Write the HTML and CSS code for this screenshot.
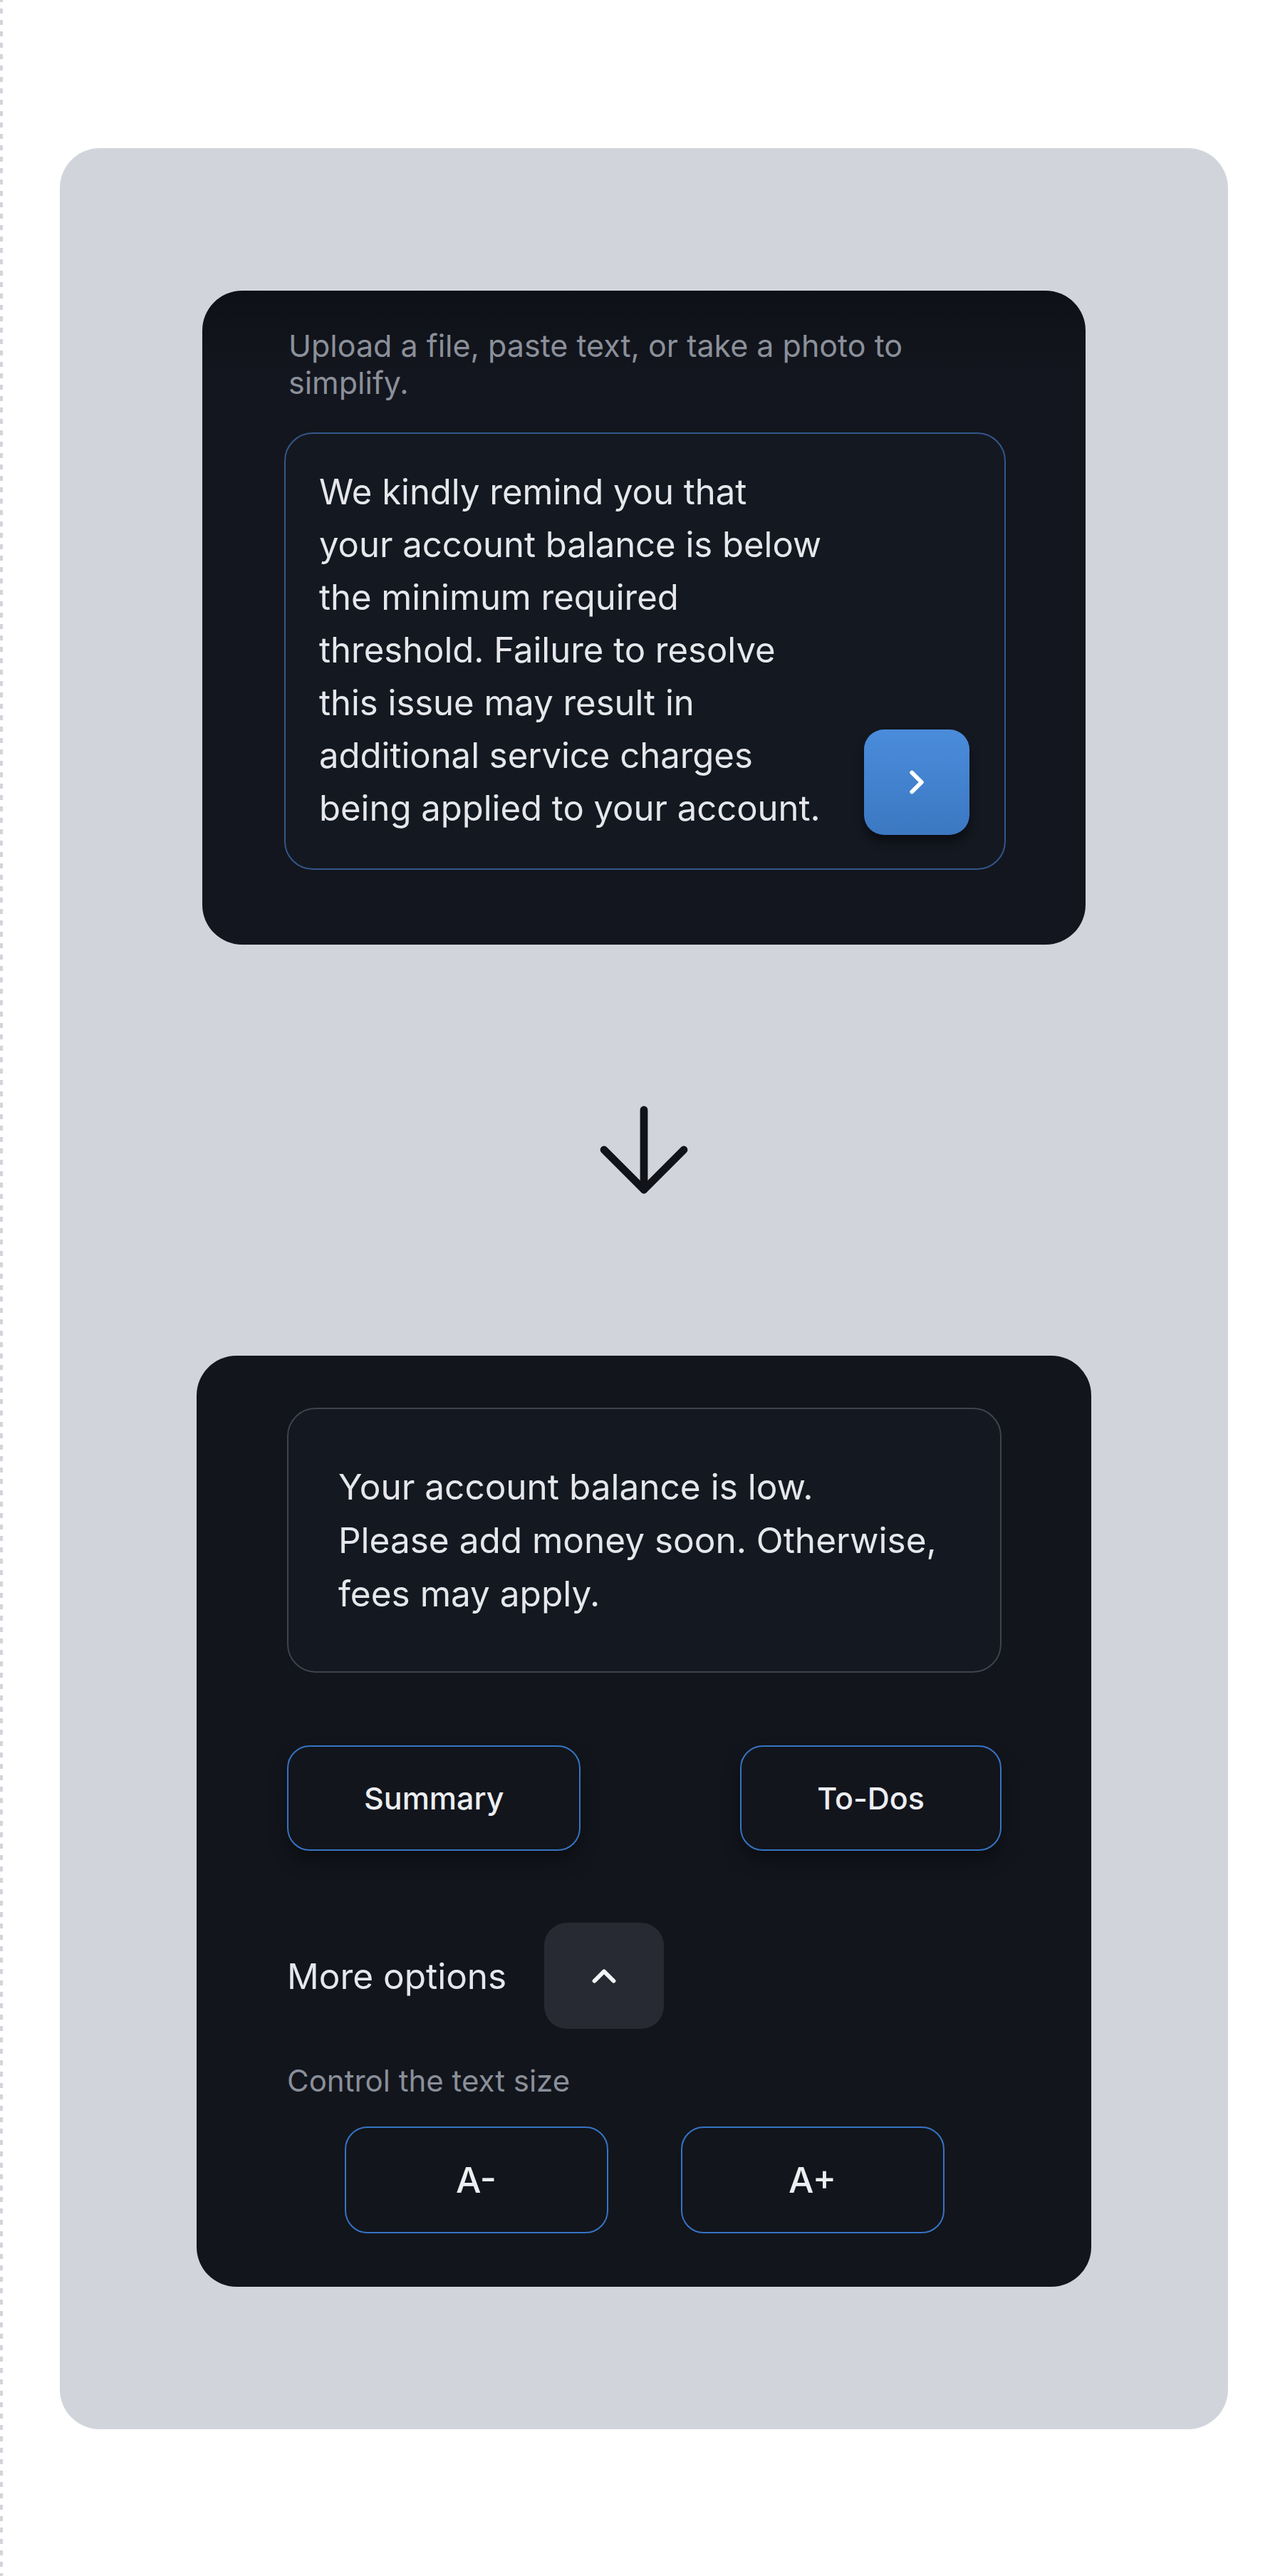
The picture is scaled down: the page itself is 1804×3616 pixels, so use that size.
FILE: index.html
```html
<!DOCTYPE html>
<html lang="en">
<head>
    <meta charset="UTF-8">
    <meta name="viewport" content="width=device-width, initial-scale=1.0">
    <title>Simplify</title>
    <link rel="stylesheet" href="styles.css">
</head>
<body>
<div class="page">
    <div class="guide"></div>
    <main class="stage">
        <div class="panel">

            <section class="input-card">
                <p class="hint">Upload a file, paste text, or take a photo to simplify.</p>
                <div class="input-box">
                    <p class="input-text">We kindly remind you that your account balance is below the minimum required threshold. Failure to resolve this issue may result in additional service charges being applied to your account.</p>
                    <button class="send-btn" aria-label="Simplify">
                        <svg width="54" height="54" viewBox="0 0 24 24" fill="none" stroke="#fff" stroke-width="2.6" stroke-linecap="round" stroke-linejoin="round"><path d="m9 18 6-6-6-6"/></svg>
                    </button>
                </div>
            </section>

            <div class="flow-arrow">
                <svg width="192" height="192" viewBox="0 0 24 24" fill="none" stroke="#111318" stroke-width="1.35" stroke-linecap="round" stroke-linejoin="round"><path d="M12 5v14"/><path d="m19 12-7 7-7-7"/></svg>
            </div>

            <section class="output-card">
                <div class="output-box">
                    <p>Your account balance is low.<br>Please add money soon. Otherwise, fees may apply.</p>
                </div>
                <div class="mode-row">
                    <button class="outline-btn mode-btn">Summary</button>
                    <button class="outline-btn mode-btn">To-Dos</button>
                </div>
                <div class="more-row">
                    <span>More options</span>
                    <button class="toggle-btn" aria-label="Hide options">
                        <svg width="54" height="54" viewBox="0 0 24 24" fill="none" stroke="#f3f4f6" stroke-width="2.6" stroke-linecap="round" stroke-linejoin="round"><path d="m18 15-6-6-6 6"/></svg>
                    </button>
                </div>
                <p class="size-label">Control the text size</p>
                <div class="size-row">
                    <button class="outline-btn size-btn">A-</button>
                    <button class="outline-btn size-btn">A+</button>
                </div>
            </section>

        </div>
    </main>
</div>
</body>
</html>
```

FILE: styles.css
```css
body {
    margin: 0;
    background-color: #fff;
    font-family: Inter, "Noto Sans", sans-serif;
}
.page {
    display: flex;
}
.guide {
    width: 4px;
    flex-shrink: 0;
    background-image: repeating-linear-gradient(to bottom, #d1d5db 0 7px, transparent 7px 16px);
    background-position: 0 12px;
}
.stage {
    flex: 1;
    padding: 208px 80px 206px;
}
.panel {
    background-color: #d1d5db;
    border-radius: 56px;
    padding: 200px 0;
    display: flex;
    flex-direction: column;
    align-items: center;
}

/* input card */
.input-card {
    width: 1240px;
    box-sizing: border-box;
    padding: 51px 112px 105px 115px;
    border-radius: 56px;
    background: linear-gradient(#0d1015, #13161e 110px);
}
.hint {
    margin: 0 0 44px;
    padding: 0 40px 0 6px;
    font-size: 43px;
    line-height: 52px;
    color: #8b909a;
}
.input-box {
    display: flex;
    align-items: flex-end;
    gap: 48px;
    padding: 45px 49px 47px 47px;
    border: 2px solid #33578a;
    border-radius: 40px;
    background-color: #141821;
}
.input-text {
    flex: 1;
    margin: 0;
    font-size: 49px;
    line-height: 74px;
    color: #e5e7eb;
}
.send-btn {
    width: 148px;
    height: 148px;
    flex-shrink: 0;
    padding: 0;
    border: none;
    border-radius: 28px;
    background: linear-gradient(#4a8cdb, #3c78c2);
    box-shadow: 0 10px 14px rgba(0, 0, 0, 0.45);
    display: flex;
    align-items: center;
    justify-content: center;
}

.flow-arrow {
    margin: 192px 0 193px;
}
.flow-arrow svg,
.send-btn svg,
.toggle-btn svg {
    display: block;
}

/* output card */
.output-card {
    width: 1256px;
    box-sizing: border-box;
    padding: 73px 126px 75px 127px;
    border-radius: 56px;
    background-color: #12151c;
    display: flex;
    flex-direction: column;
}
.output-box {
    padding: 72px 74px 71px 70px;
    border: 2px solid #3e434d;
    border-radius: 40px;
    background-color: #141821;
}
.output-box p {
    margin: 0;
    font-size: 49.5px;
    line-height: 75px;
    color: #e5e7eb;
}
.outline-btn {
    border: 2px solid #3674c4;
    border-radius: 32px;
    background-color: #12151c;
    color: #eceef1;
    font-family: inherit;
    font-weight: 500;
}
.mode-row {
    display: flex;
    justify-content: space-between;
    margin-top: 102px;
}
.mode-btn {
    height: 148px;
    padding: 0 106px;
    font-size: 43px;
    box-shadow: 0 14px 24px rgba(0, 0, 0, 0.35);
}
.more-row {
    display: flex;
    align-items: center;
    gap: 53px;
    margin-top: 101px;
    font-size: 49.5px;
    color: #e5e7eb;
}
.toggle-btn {
    width: 168px;
    height: 149px;
    padding: 0;
    border: none;
    border-radius: 32px;
    background-color: #272a33;
    display: flex;
    align-items: center;
    justify-content: center;
}
.size-label {
    margin: 47px 0 38px;
    font-size: 42px;
    line-height: 52px;
    color: #8a8f99;
}
.size-row {
    display: flex;
    justify-content: center;
    gap: 102px;
}
.size-btn {
    width: 370px;
    height: 150px;
    font-size: 50px;
}
```
